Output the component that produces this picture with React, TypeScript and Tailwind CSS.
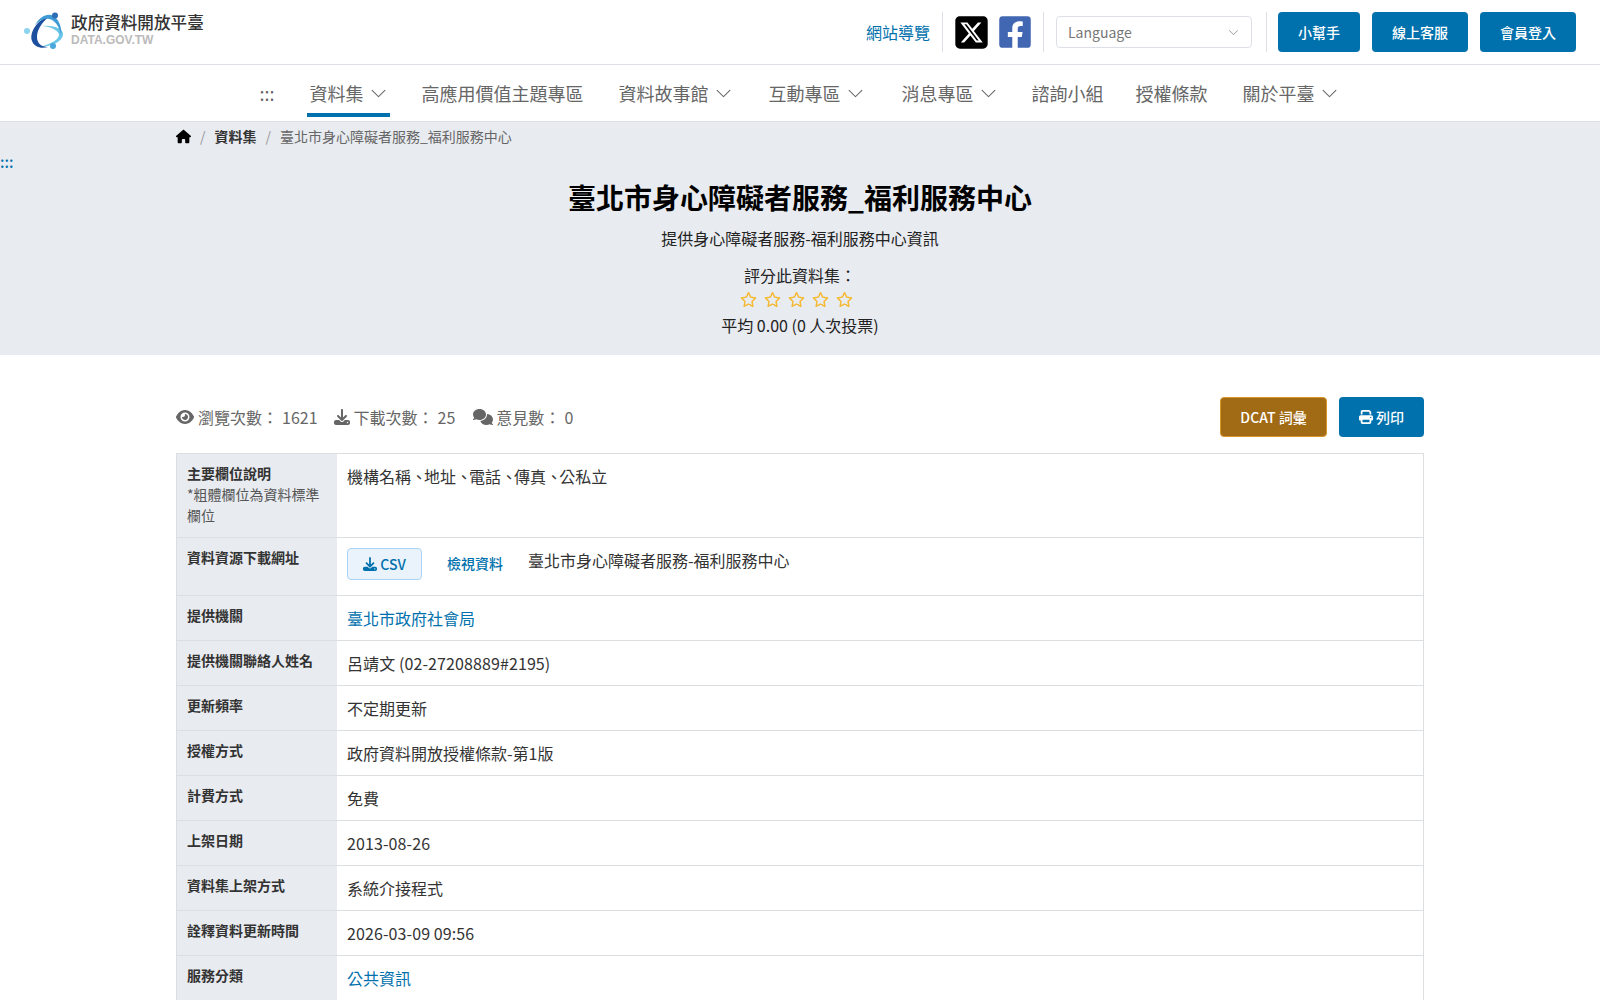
import { BsChevronDown } from "react-icons/bs";
import { FaFacebookSquare } from "react-icons/fa";
import { FaComments, FaDownload, FaEye, FaHouse, FaPrint, FaRegStar, FaSquareXTwitter } from "react-icons/fa6";

const navItems = [
  { label: "資料集", arrow: true, active: true, gap: "mr-[29px]" },
  { label: "高應用價值主題專區", gap: "mr-[29px]" },
  { label: "資料故事館", arrow: true, gap: "mr-[31px]" },
  { label: "互動專區", arrow: true, gap: "mr-[32px]" },
  { label: "消息專區", arrow: true, gap: "mr-[29px]" },
  { label: "諮詢小組", gap: "mr-[26px]" },
  { label: "授權條款", gap: "mr-[29px]" },
  { label: "關於平臺", arrow: true, gap: "" },
];

const rows = [
  { label: "提供機關", value: "臺北市政府社會局", link: true },
  { label: "提供機關聯絡人姓名", value: "呂靖文 (02-27208889#2195)", latin: true },
  { label: "更新頻率", value: "不定期更新" },
  { label: "授權方式", value: "政府資料開放授權條款-第1版" },
  { label: "計費方式", value: "免費" },
  { label: "上架日期", value: "2013-08-26", latin: true },
  { label: "資料集上架方式", value: "系統介接程式" },
  { label: "詮釋資料更新時間", value: "2026-03-09 09:56", latin: true },
  { label: "服務分類", value: "公共資訊", link: true },
];

function Logo() {
  return (
    <svg width="42" height="40" viewBox="0 0 42 40" className="shrink-0">
      <path d="M19 14C30 13 40 17 39 23C38 30 27 35 14 35C24 33 34 29 35 23C35 19 28 15 19 14z" fill="#6cc6e8" />
      <path d="M26 4C14 7 5 20 8 29C10 35 17 37 24 35C17 35 13 31 13 25C13 17 19 9 26 4z" fill="#1d4f9f" />
      <path d="M11 13C16 4 25 0 31 5C36 10 38 17 37 23C35 14 31 8 25 7C20 6 15 9 11 13z" fill="#3f9ad6" />
      <circle cx="31" cy="3.5" r="3" fill="#2f6db5" />
      <circle cx="3" cy="19" r="3" fill="#8ed4ef" />
      <circle cx="29" cy="34" r="3" fill="#4aa8dc" />
    </svg>
  );
}

function Stat({ icon, label, value }: { icon: React.ReactNode; label: string; value: string }) {
  return (
    <span className="flex items-center gap-[4px]">
      {icon}
      <span>{label}：</span>
      <span>{value}</span>
    </span>
  );
}

export default function App() {
  return (
    <div className="h-[1000px] overflow-hidden bg-white text-[16px] text-[#333] font-['Noto_Sans_CJK_TC',sans-serif]">
      <header className="flex h-[65px] items-start justify-between border-b border-[#dcdfe8] pl-[24px] pr-[24px]">
        <div className="flex items-center gap-[5px] pt-[12px]">
          <Logo />
          <div className="-mt-[5px] flex flex-col">
            <span className="text-[16.6px] leading-[21px] font-medium text-[#333]">政府資料開放平臺</span>
            <span className="text-[12px] leading-[14px] font-bold text-[#bbb] font-['Liberation_Sans',sans-serif]">DATA.GOV.TW</span>
          </div>
        </div>
        <div className="flex items-center pt-[12px]">
          <a className="pr-[12px] text-[16px] text-[#0071ad]">網站導覽</a>
          <div className="h-[40px] w-px bg-[#dcdfe8]" />
          <FaSquareXTwitter className="ml-[10px] text-[37px] text-black" />
          <FaFacebookSquare className="ml-[7px] text-[36px] text-[#4267b2]" />
          <div className="ml-[10px] h-[40px] w-px bg-[#dcdfe8]" />
          <div className="ml-[12px] flex h-[32px] w-[196px] items-center justify-between rounded-[4px] border border-[#dcdfe8] pl-[11px] pr-[12px] text-[14px] text-[#777]">
            <span>Language</span>
            <BsChevronDown className="text-[11px] text-[#999]" />
          </div>
          <div className="ml-[14px] mr-[11px] h-[40px] w-px bg-[#dcdfe8]" />
          <div className="flex gap-[12px]">
            <button className="h-[40px] w-[82px] rounded-[4px] bg-[#0071ad] text-[14px] font-medium text-white">小幫手</button>
            <button className="h-[40px] w-[96px] rounded-[4px] bg-[#0071ad] text-[14px] font-medium text-white">線上客服</button>
            <button className="h-[40px] w-[96px] rounded-[4px] bg-[#0071ad] text-[14px] font-medium text-white">會員登入</button>
          </div>
        </div>
      </header>

      <nav className="flex h-[57px] items-start justify-center border-b border-[#dcdfe8] text-[18px] text-[#666]">
        <span className="mr-[32px] pt-[15px] leading-[26px]">:::</span>
        {navItems.map((item) => (
          <a
            key={item.label}
            className={`flex h-[52px] items-center gap-[6px] border-b-4 px-[3px] pt-[8px] ${item.gap} ${item.active ? "border-[#0071ad]" : "border-transparent"}`}
          >
            {item.label}
            {item.arrow && <BsChevronDown className="text-[17px]" />}
          </a>
        ))}
      </nav>

      <section className="h-[233px] bg-[#e8ebf0]">
        <div className="flex items-center gap-[9px] pl-[176px] pt-[3px] text-[14px] leading-[22px]">
          <FaHouse className="text-[15px] text-black" />
          <span className="text-[#999]">/</span>
          <span className="font-bold text-[#333]">資料集</span>
          <span className="text-[#999]">/</span>
          <span className="text-[#666]">臺北市身心障礙者服務_福利服務中心</span>
        </div>
        <div className="pt-[8px] text-[15px] font-medium leading-[14px] text-[#0071ad]">:::</div>
        <h1 className="mt-[9px] text-center text-[28px] font-bold leading-[38px] text-black">臺北市身心障礙者服務_福利服務中心</h1>
        <p className="mt-[10px] text-center leading-[24px] text-[#222]">提供身心障礙者服務-福利服務中心資訊</p>
        <p className="mt-[13px] text-center leading-[24px] text-[#222]">評分此資料集：</p>
        <div className="mt-[4px] mr-[8px] flex justify-center gap-[7px] text-[17px] text-[#f5b82e]">
          <FaRegStar />
          <FaRegStar />
          <FaRegStar />
          <FaRegStar />
          <FaRegStar />
        </div>
        <p className="mt-[5px] text-center leading-[24px] text-[#222]">平均 0.00 (0 人次投票)</p>
      </section>

      <main className="mx-[176px] pt-[42px]">
        <div className="flex h-[40px] items-center justify-between">
          <div className="flex items-center gap-[16px] text-[#666]">
            <Stat icon={<FaEye className="text-[18px]" />} label="瀏覽次數" value="1621" />
            <Stat icon={<FaDownload className="text-[16px]" />} label="下載次數" value="25" />
            <Stat icon={<FaComments className="ml-[2px] -mr-[1px] text-[20px]" />} label="意見數" value="0" />
          </div>
          <div className="flex gap-[12px]">
            <button className="h-[40px] w-[107px] rounded-[4px] border border-[#d9952c] bg-[#a16a14] text-[14px] font-medium text-white">DCAT 詞彙</button>
            <button className="flex h-[40px] w-[85px] items-center justify-center gap-[3px] rounded-[4px] bg-[#0071ad] text-[14px] font-medium text-white">
              <FaPrint />
              列印
            </button>
          </div>
        </div>

        <div className="mt-[16px] border-x border-t border-[#dcdfe2]">
          <div className="flex h-[84px] border-b border-[#dcdfe2]">
            <div className="w-[160px] shrink-0 bg-[#e8ebf0] px-[10px] pt-[9px] text-[14px] leading-[21px]">
              <div className="font-bold">主要欄位說明</div>
              <div className="text-[#555]">*粗體欄位為資料標準欄位</div>
            </div>
            <div className="px-[10px] pt-[9px] leading-[26px]">
              機構名稱<span className="tracking-[-3px]">、</span>地址<span className="tracking-[-3px]">、</span>電話<span className="tracking-[-3px]">、</span>傳真<span className="tracking-[-3px]">、</span>公私立
            </div>
          </div>
          <div className="flex h-[58px] border-b border-[#dcdfe2]">
            <div className="w-[160px] shrink-0 bg-[#e8ebf0] px-[10px] pt-[9px] text-[14px] font-bold leading-[21px]">資料資源下載網址</div>
            <div className="flex items-start px-[10px] pt-[10px]">
              <button className="flex h-[32px] w-[75px] items-center justify-center gap-[3px] rounded-[4px] border border-[#a9d4f5] bg-[#eaf3fc] text-[14px] font-medium text-[#0071ad]">
                <FaDownload />
                CSV
              </button>
              <a className="ml-[25px] mt-[4px] text-[14px] font-medium leading-[22px] text-[#0071ad]">檢視資料</a>
              <span className="ml-[25px] -mt-[1px] leading-[26px]">臺北市身心障礙者服務-福利服務中心</span>
            </div>
          </div>
          {rows.map((row) => (
            <div key={row.label} className="flex h-[45px] border-b border-[#dcdfe2]">
              <div className="w-[160px] shrink-0 bg-[#e8ebf0] px-[10px] pt-[9px] text-[14px] font-bold leading-[21px]">{row.label}</div>
              <div className={`px-[10px] pt-[9px] leading-[26px] ${row.link ? "text-[#0071ad]" : ""} ${row.latin ? "tracking-[0.1px]" : ""}`}>{row.value}</div>
            </div>
          ))}
        </div>
      </main>
    </div>
  );
}
